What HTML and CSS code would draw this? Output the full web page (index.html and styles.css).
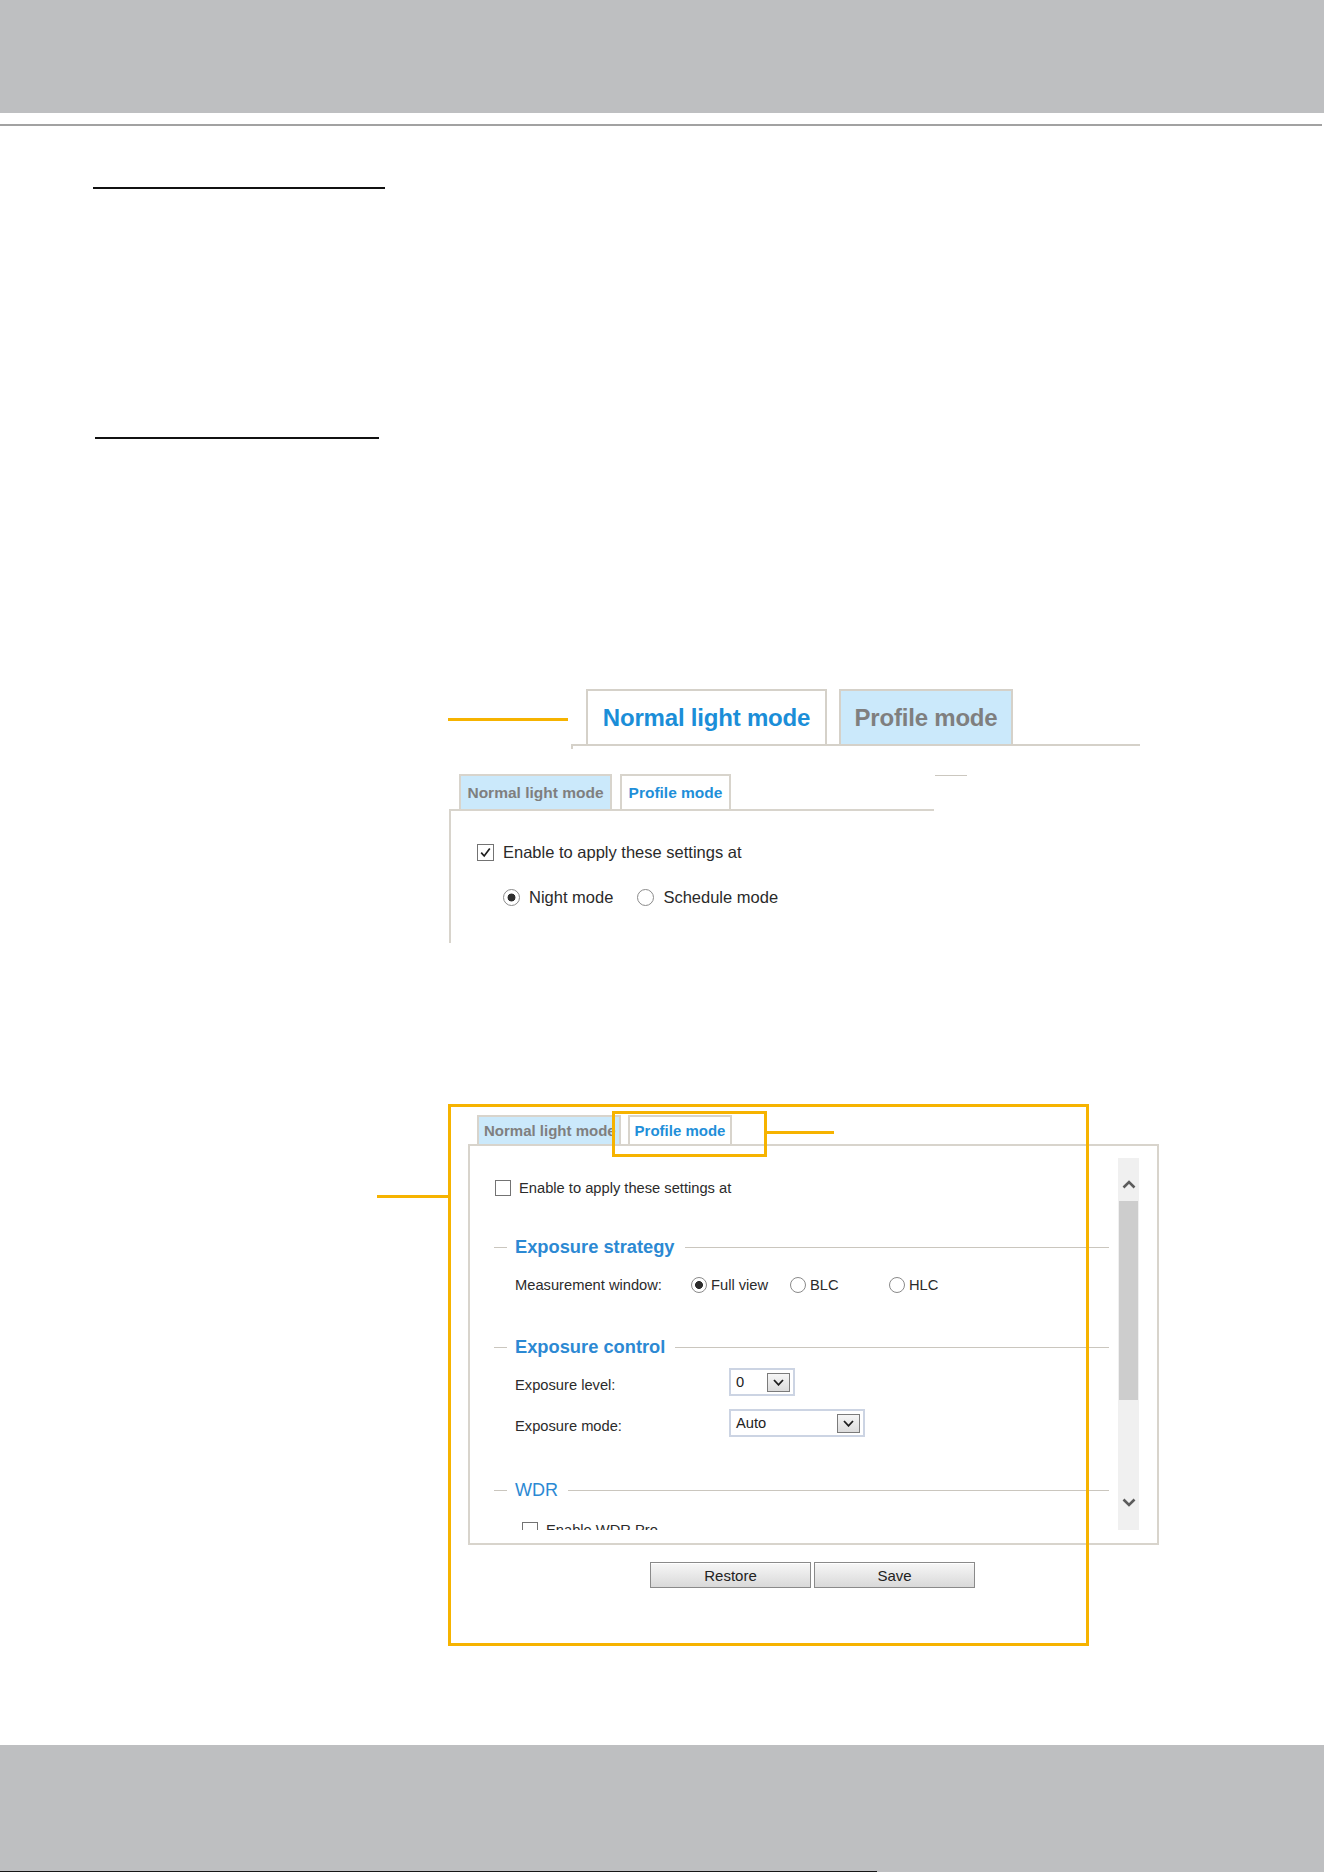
FILE: index.html
```html
<!DOCTYPE html>
<html lang="en">
<head>
<meta charset="utf-8">
<title>Image settings – Profile mode</title>
<link rel="stylesheet" href="styles.css">
</head>
<body>
<header class="band band-top"></header>
<div class="top-rule"></div>

<main class="manual">
  <div class="title-rule title-rule-a"></div>
  <div class="title-rule title-rule-b"></div>

  <!-- enlarged tab strip -->
  <figure class="shot shot-tabs">
    <span class="callout callout-tabs"></span>
    <div class="big-tabs">
      <div class="big-tabrow">
        <div class="big-tab big-tab-on">Normal light mode</div>
        <div class="big-tab big-tab-off">Profile mode</div>
      </div>
      <div class="big-panel-edge"></div>
    </div>
  </figure>

  <!-- profile tab: night mode selection -->
  <figure class="shot shot-night">
    <div class="tabrow tabrow-night">
      <div class="tab tab-muted">Normal light mode</div>
      <div class="tab tab-current">Profile mode</div>
      <span class="cut-edge"></span>
    </div>
    <div class="panel-night">
      <label class="check-row">
        <span class="checkbox">
          <svg viewBox="0 0 15 15" width="15" height="15"><path d="M3.2 7.6 L6.2 11 L11.8 3.4" fill="none" stroke="#1e1e1e" stroke-width="1.7"/></svg>
        </span>
        Enable to apply these settings at
      </label>
      <div class="radio-row">
        <span class="radio is-on"></span><span class="radio-text">Night mode</span>
        <span class="radio radio-gap"></span><span class="radio-text">Schedule mode</span>
      </div>
    </div>
  </figure>

  <!-- profile tab: full settings panel -->
  <figure class="shot shot-profile">
    <div class="tabrow tabrow-profile">
      <div class="tab tab-muted">Normal light mode</div>
      <div class="tab tab-current">Profile mode</div>
    </div>
    <div class="panel-profile">
      <div class="scroll-view">
        <label class="check-row check-row-top"><span class="checkbox"></span>Enable to apply these settings at</label>

        <div class="group-head group-first"><span class="group-dash"></span><span class="group-title">Exposure strategy</span><span class="group-line"></span></div>
        <div class="field-row field-row-radio">
          <span class="field-label">Measurement window:</span>
          <span class="opt"><span class="radio is-on"></span>Full view</span>
          <span class="opt"><span class="radio"></span>BLC</span>
          <span class="opt"><span class="radio"></span>HLC</span>
        </div>

        <div class="group-head group-next"><span class="group-dash"></span><span class="group-title">Exposure control</span><span class="group-line"></span></div>
        <div class="field-row field-row-select field-level">
          <span class="field-label">Exposure level:</span>
          <span class="select select-narrow"><span>0</span><span class="select-btn"><svg viewBox="0 0 11 7" width="11" height="7"><path d="M1 1 L5.5 5.8 L10 1" fill="none" stroke="#1f1f1f" stroke-width="1.8"/></svg></span></span>
        </div>
        <div class="field-row field-row-select field-mode">
          <span class="field-label">Exposure mode:</span>
          <span class="select select-wide"><span>Auto</span><span class="select-btn"><svg viewBox="0 0 11 7" width="11" height="7"><path d="M1 1 L5.5 5.8 L10 1" fill="none" stroke="#1f1f1f" stroke-width="1.8"/></svg></span></span>
        </div>

        <div class="group-head group-next group-head-plain"><span class="group-dash"></span><span class="group-title">WDR</span><span class="group-line"></span></div>
        <label class="check-row check-row-sub"><span class="checkbox"></span>Enable WDR Pro</label>
      </div>
      <div class="scrollbar">
        <span class="scroll-btn scroll-up"><svg viewBox="0 0 14 10" width="14" height="10"><path d="M1.5 8.5 L7 3 L12.5 8.5" fill="none" stroke="#5c5c5c" stroke-width="2.6"/></svg></span>
        <span class="scroll-thumb"></span>
        <span class="scroll-btn scroll-down"><svg viewBox="0 0 14 10" width="14" height="10"><path d="M1.5 1.5 L7 7 L12.5 1.5" fill="none" stroke="#5c5c5c" stroke-width="2.6"/></svg></span>
      </div>
    </div>
    <div class="actions">
      <button class="btn" type="button">Restore</button>
      <button class="btn" type="button">Save</button>
    </div>

    <span class="mark mark-frame"></span>
    <span class="mark mark-lead"></span>
    <span class="mark mark-tab-box"></span>
    <span class="mark mark-tab-lead"></span>
  </figure>
</main>

<footer class="band band-bottom"><span class="crop-edge"></span></footer>
</body>
</html>
```

FILE: styles.css
```css
* { box-sizing: border-box; }

html, body { margin: 0; }

body {
  font-family: "Liberation Sans", Arial, sans-serif;
  color: #2a2a2a;
  background: #fff;
}

/* page bands */
.band { display: block; background: #bebfc1; }
.band-top { height: 113px; }
.band-bottom {
  height: 127px;
  margin-top: 157px;
  display: flex;
  flex-direction: column;
  justify-content: flex-end;
}
.crop-edge { display: block; width: 877px; height: 1px; background: #161616; }

.top-rule { height: 2px; margin: 11px 2px 0 0; background: #a2a2a2; }

.title-rule { height: 2px; background: #111; }
.title-rule-a { width: 292px; margin: 61px 0 0 93px; }
.title-rule-b { width: 284px; margin: 248px 0 0 95px; }

.shot { margin: 0; }

/* enlarged tab strip */
.shot-tabs { display: flex; align-items: flex-start; margin: 250px 0 0 448px; }
.callout { display: block; background: #f6b300; }
.callout-tabs { width: 120px; height: 3px; margin-top: 29px; }
.big-tabs { width: 569px; margin-left: 3px; }
.big-tabrow {
  display: flex;
  gap: 12px;
  padding-left: 15px;
  border-bottom: 2px solid #d5d1c9;
}
.big-tab {
  height: 55px;
  border: 2px solid #d5d1c9;
  border-bottom: 0;
  display: flex;
  align-items: center;
  justify-content: center;
  font-size: 24px;
  font-weight: 700;
  letter-spacing: -0.2px;
}
.big-tab-on { width: 241px; background: #fff; color: #1b8ed8; }
.big-tab-off { width: 174px; background: #cbe9fb; color: #7f7f7f; }
.big-panel-edge { width: 0; height: 3px; border-left: 2px solid #d5d1c9; }

/* shared tabs */
.tabrow { display: flex; align-items: flex-start; }
.tab {
  border: 2px solid #d8d4cc;
  border-bottom: 0;
  font-weight: 700;
  white-space: nowrap;
  display: flex;
  align-items: center;
  justify-content: center;
}
.tab-muted { background: #cbe9fb; color: #7f7f7f; }
.tab-current { background: #fff; color: #1f8fd9; }

/* night mode panel */
.shot-night { width: 518px; margin: 25px 0 0 449px; }
.tabrow-night { height: 35px; }
.tabrow-night .tab { height: 35px; font-size: 15.5px; }
.tabrow-night .tab-muted { width: 153px; margin-left: 10px; }
.tabrow-night .tab-current { width: 111px; margin-left: 8px; }
.cut-edge { display: block; width: 32px; height: 1px; margin: 1px 0 0 auto; background: #cbc7bf; }

.panel-night {
  width: 485px;
  height: 134px;
  border-top: 2px solid #d8d4cc;
  border-left: 2px solid #d8d4cc;
  padding: 33px 0 0 26px;
  font-size: 16.5px;
  color: #2a2a2a;
}
.panel-night .checkbox { width: 17px; height: 17px; }
.panel-night .check-row { gap: 9px; height: 17px; }

.radio-row { display: flex; align-items: center; height: 17px; margin: 28px 0 0 26px; }
.radio-row .radio { width: 17px; height: 17px; }
.radio-text { margin-left: 9px; }
.radio-gap { margin-left: 24px; }

/* form atoms */
.check-row { display: flex; align-items: center; gap: 8px; }
.checkbox {
  flex: none;
  display: flex;
  align-items: center;
  justify-content: center;
  width: 16px;
  height: 16px;
  border: 1px solid #737373;
  background: #fff;
}
.radio {
  flex: none;
  display: block;
  width: 16px;
  height: 16px;
  border: 1px solid #8a8a8a;
  border-radius: 50%;
  background: #fff;
}
.radio.is-on { background: radial-gradient(circle, #2e2e2e 0 3.6px, #fff 4.3px); }

/* profile settings panel */
.shot-profile { position: relative; width: 691px; margin: 172px 0 0 468px; }
.tabrow-profile { height: 29px; }
.tabrow-profile .tab { height: 29px; font-size: 15px; }
.tabrow-profile .tab-muted { width: 144px; margin-left: 9px; justify-content: flex-start; padding-left: 5px; }
.tabrow-profile .tab-current { width: 104px; margin-left: 7px; }

.panel-profile {
  display: flex;
  align-items: flex-start;
  height: 401px;
  border: 2px solid #d8d4cc;
}
.scroll-view {
  flex: 1;
  height: 384px;
  overflow: hidden;
  padding: 0 9px 0 24px;
  font-size: 14.7px;
  color: #2b2b2b;
}
.check-row-top { height: 16px; margin: 34px 0 0 1px; }
.check-row-sub { height: 16px; margin: 22px 0 0 28px; }

.group-head { display: flex; align-items: center; height: 20px; }
.group-first { margin-top: 41px; }
.group-next { margin-top: 43px; }
.group-dash { flex: none; width: 13px; height: 1px; background: #cac6be; }
.group-title {
  margin: 0 10px 0 8px;
  font-size: 18.3px;
  font-weight: 700;
  color: #2c89d3;
  white-space: nowrap;
}
.group-line { flex: 1; height: 1px; background: #cac6be; }
.group-head-plain .group-title { font-weight: 400; font-size: 18px; }

.field-row { display: flex; align-items: center; margin-left: 21px; }
.field-label { flex: none; }
.field-row-radio { height: 18px; margin-top: 19px; }
.field-row-radio .field-label { width: 176px; }
.opt { display: flex; align-items: center; gap: 4px; width: 99px; }

.field-row-select { height: 28px; }
.field-row-select .field-label { width: 214px; padding-top: 5px; }
.field-level { margin-top: 11px; }
.field-mode { margin-top: 13px; }

.select {
  display: flex;
  align-items: center;
  height: 28px;
  padding: 0 3px 0 5px;
  border: 2px solid #ccd4e3;
  background: #fff;
  color: #222;
}
.select-narrow { width: 66px; }
.select-wide { width: 136px; }
.select-btn {
  display: flex;
  align-items: center;
  justify-content: center;
  width: 23px;
  height: 19px;
  margin-left: auto;
  border: 1px solid #7b7b7b;
  background: linear-gradient(#f6f6f6, #dcdcdc);
}

.scrollbar {
  flex: none;
  display: flex;
  flex-direction: column;
  align-items: center;
  width: 21px;
  height: 372px;
  margin: 12px 18px 0 0;
  background: #f0f0f0;
}
.scroll-btn { display: flex; justify-content: center; width: 100%; }
.scroll-up { height: 42px; padding-top: 21px; }
.scroll-thumb { display: block; width: 19px; height: 199px; margin-top: 1px; background: #cdcdcd; }
.scroll-down { height: 32px; margin-top: auto; }

.actions { display: flex; gap: 3px; margin: 17px 0 0 182px; }
.btn {
  width: 161px;
  height: 26px;
  padding: 0;
  border: 1px solid #8a8a8a;
  background: linear-gradient(#f7f7f7, #d9d9d9);
  box-shadow: inset 0 1px 0 #fff;
  font: 15px "Liberation Sans", Arial, sans-serif;
  color: #222;
}

/* annotation marks drawn over the screenshot */
.mark { position: absolute; display: block; }
.mark-frame { left: -20px; top: -11px; width: 641px; height: 542px; border: 3px solid #f6b300; }
.mark-lead { left: -91px; top: 80px; width: 71px; height: 3px; background: #f6b300; }
.mark-tab-box { left: 144px; top: -4px; width: 155px; height: 46px; border: 3px solid #f6b300; }
.mark-tab-lead { left: 299px; top: 16px; width: 67px; height: 3px; background: #f6b300; }
```
